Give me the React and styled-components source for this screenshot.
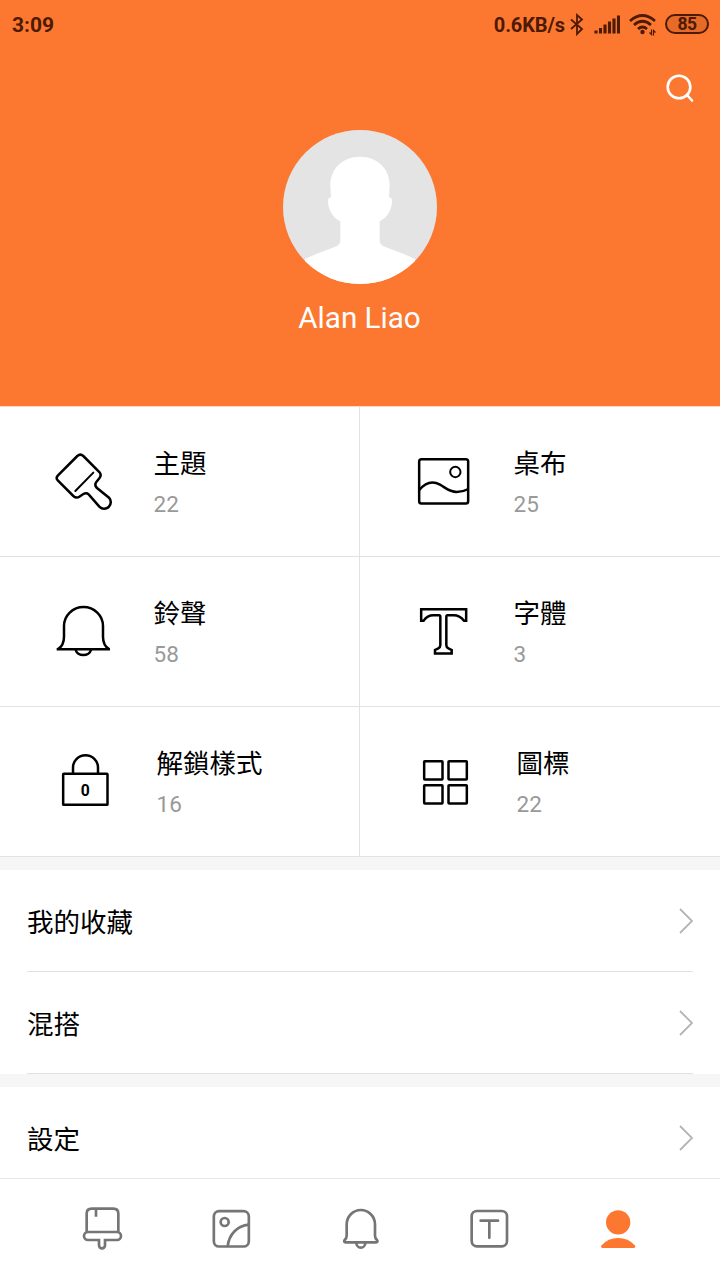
import styled, { createGlobalStyle } from "styled-components"

const GlobalStyle = createGlobalStyle`
  * {
    box-sizing: border-box;
  }
  body {
    margin: 0;
    background-color: #fff;
    font-family: Roboto, "Noto Sans CJK TC", sans-serif;
  }
  p {
    margin: 0;
  }
  svg {
    display: block;
    flex-shrink: 0;
  }
`

const Screen = styled.div`
  width: 720px;
  height: 1280px;
  display: flex;
  overflow: hidden;
  flex-direction: column;
  background-color: #fff;
`

const Header = styled.header`
  height: 406px;
  display: flex;
  flex-shrink: 0;
  align-items: center;
  flex-direction: column;
  background-color: #fc7830;
`

const StatusBar = styled.div`
  width: 100%;
  height: 48px;
  display: flex;
  color: #4d1a04;
  font-size: 20px;
  font-weight: 700;
  align-items: center;
  padding: 1px 11px 0 12px;
  justify-content: space-between;
`

const Time = styled.span`
  font-size: 21px;
`

const StatusRight = styled.div`
  display: flex;
  align-items: center;
`

const Speed = styled.span`
  letter-spacing: -0.1px;
`

const StatusIcon = styled.svg`
  fill: none;
  height: 24px;
  stroke: currentColor;
  width: ${(props) => props.$width}px;
  margin-left: ${(props) => props.$gap}px;
`

const Battery = styled.div`
  width: 44px;
  height: 20px;
  display: flex;
  font-size: 17.5px;
  margin: -2px 0 0 9px;
  align-items: center;
  border-radius: 10px;
  letter-spacing: -0.5px;
  justify-content: center;
  border: 2px solid currentColor;
  background-color: #e66a28;
`

const Toolbar = styled.div`
  width: 100%;
  height: 82px;
  display: flex;
  padding: 25px 25px 0 0;
  justify-content: flex-end;
`

const Avatar = styled.svg`
  width: 154px;
  height: 154px;
  border-radius: 50%;
  background-color: #e4e4e4;
`

const Username = styled.p`
  color: #fff;
  font-size: 29.6px;
  margin: 16px 1px 0 0;
  line-height: 36px;
`

const Grid = styled.section`
  display: grid;
  flex-shrink: 0;
  border-top: 1px solid #fdd9c4;
  grid-template-columns: 1fr 1fr;
`

const Cell = styled.div`
  height: 150px;
  display: flex;
  padding: 33px 0 0 40px;
  border-bottom: 1px solid #e2e2e2;
  &:nth-child(odd) {
    border-right: 1px solid #e2e2e2;
  }
`

const CellIcon = styled.svg`
  fill: none;
  width: 90px;
  height: 90px;
  stroke: #000;
  stroke-width: 7.5;
`

const CellText = styled.div`
  padding-top: 1px;
  padding-left: ${(props) => (props.$wide ? 26.5 : 23.5)}px;
`

const CellTitle = styled.p`
  color: #000;
  font-size: 26.5px;
  line-height: 46px;
`

const CellCount = styled.p`
  color: #999;
  font-size: 22.5px;
  line-height: 34px;
`

const Divider = styled.div`
  height: 13px;
  flex-shrink: 0;
  background-color: #f6f6f6;
`

const Row = styled.div`
  color: #000;
  height: 102px;
  display: flex;
  flex-shrink: 0;
  margin: 0 27px;
  font-size: 26.5px;
  align-items: center;
  justify-content: space-between;
  border-bottom: 1px solid #e2e2e2;
`

const List = styled.section`
  flex: 1;
  min-height: 0;
  display: flex;
  overflow: hidden;
  flex-direction: column;
`

const TabBar = styled.nav`
  height: 102px;
  display: flex;
  flex-shrink: 0;
  padding: 0 38px 0 37px;
  background-color: #fff;
  border-top: 1px solid #e8e8e8;
`

const Tab = styled.div`
  flex: 1;
  display: flex;
  padding-top: 20px;
  justify-content: center;
`

const TabIcon = styled.svg`
  width: 60px;
  height: 60px;
  stroke-width: 8;
  fill: ${(props) => (props.$active ? "#fc7830" : "none")};
  stroke: ${(props) => (props.$active ? "none" : "#757575")};
`

const cells = [
  {
    title: "主題",
    count: 22,
    icon: (
      <>
        <path d="M112 48L54 106Q46 114 54 122L100 168Q109 176 118 170L130 162Q139 157 146 163L178 200A19 19 0 0 0 207 173L171 144Q162 135 169 126L178 115Q186 105 178 96L130 48Q121 40 112 48Z" />
        <path d="M106 153L160 98" strokeWidth="6" strokeLinecap="round" />
      </>
    ),
  },
  {
    title: "桌布",
    count: 25,
    icon: (
      <>
        <rect x="57.5" y="57.5" width="147" height="133" rx="7" />
        <circle cx="166" cy="96" r="15.5" strokeWidth="6" />
        <path d="M58 150C76 128 98 122 120 134C138 144 148 156 170 156C184 156 196 152 205 147" />
      </>
    ),
  },
  {
    title: "鈴聲",
    count: 58,
    icon: (
      <>
        <path d="M54 177Q72 166 72 140V108A58.5 57 0 0 1 189 108V140Q189 166 207 177" />
        <path d="M50 178H210M107 180A23.5 19 0 0 0 153 180" />
      </>
    ),
  },
  {
    title: "字體",
    count: 3,
    icon: (
      <path d="M63.5 57.5H198.5V92H192Q179 76 161 76H143Q139 76 139 80V166Q139 172 145 175L155 180V190.5H105V180L115 175Q121 172 121 166V80Q121 76 117 76H100Q82 76 71 92H63.5Z" />
    ),
  },
  {
    title: "解鎖樣式",
    count: 16,
    wide: true,
    icon: (
      <>
        <rect x="69.5" y="101.5" width="133" height="93" rx="2" />
        <path d="M99 101V83A37.5 37.5 0 0 1 174 83V101" />
        <text
          x="136"
          y="167"
          fill="#000"
          stroke="none"
          fontSize="50"
          fontWeight="700"
          textAnchor="middle"
          textLength="27"
          lengthAdjust="spacingAndGlyphs"
        >
          0
        </text>
      </>
    ),
  },
  {
    title: "圖標",
    count: 22,
    wide: true,
    icon: (
      <>
        <rect x="72.5" y="63.5" width="55" height="55" rx="2" />
        <rect x="145.5" y="63.5" width="55" height="55" rx="2" />
        <rect x="72.5" y="135.5" width="55" height="55" rx="2" />
        <rect x="145.5" y="135.5" width="55" height="55" rx="2" />
      </>
    ),
  },
]

const tabs = [
  {
    name: "themes",
    icon: (
      <>
        <path d="M44 99V44Q44 29 59 29H124Q139 29 139 44V99M72 30V53" />
        <path d="M81 123H48A12 12 0 0 1 48 99H135A12 12 0 0 1 135 123H99V139A9 9 0 0 1 81 139V123Z" />
      </>
    ),
  },
  {
    name: "wallpapers",
    icon: (
      <>
        <rect x="38.5" y="36.5" width="105" height="106" rx="16" />
        <circle cx="71" cy="69" r="12" />
        <path d="M80 142C84 105 110 80 143 77" />
      </>
    ),
  },
  {
    name: "ringtones",
    icon: (
      <>
        <path d="M50 110V76A42.5 43 0 0 1 135 76V110Q135 117 141 123Q145 130 138 130H47Q40 130 44 123Q50 117 50 110Z" />
        <path d="M79 131A13.5 15 0 0 0 106 131" />
      </>
    ),
  },
  {
    name: "fonts",
    icon: (
      <>
        <rect x="38" y="36" width="106" height="106" rx="16" />
        <path d="M65 65H117M91 65V116" strokeLinecap="round" />
      </>
    ),
  },
  {
    name: "profile",
    active: true,
    icon: (
      <>
        <circle cx="90.5" cy="70" r="36.5" />
        <path d="M44 147Q36 146 41 139Q60 117 90.5 117Q121 117 140 139Q145 146 137 147Z" />
      </>
    ),
  },
]

const Chevron = () => (
  <svg width="14" height="26" fill="none" stroke="#b4b4b4" strokeWidth="1.8">
    <path d="M1 1L13 13L1 25" />
  </svg>
)

const App = () => {
  return (
    <Screen>
      <GlobalStyle />
      <Header>
        <StatusBar>
          <Time>3:09</Time>
          <StatusRight>
            <Speed>0.6KB/s</Speed>
            <StatusIcon $width={14} $gap={5} viewBox="0 0 14 24">
              <path d="M1 6.5L12 16L7 21V2L12 6.5L1 16" strokeWidth="1.8" />
            </StatusIcon>
            <StatusIcon $width={26} $gap={10} viewBox="0 0 26 24">
              <path
                d="M2 20.5V17.5M6.5 20.5V15M11 20.5V11.5M15.5 20.5V8.5M20 20.5V5.5M24.5 20.5V2.5"
                strokeWidth="3.1"
              />
            </StatusIcon>
            <StatusIcon $width={27} $gap={9} viewBox="0 0 27 24">
              <path
                d="M1 8Q13.5 -3 26 8M5 12Q13.5 4.5 22 12M9 16Q13.5 12 18 16"
                strokeWidth="2.7"
              />
              <circle cx="13.5" cy="19" r="2.2" fill="currentColor" stroke="none" />
              <path d="M22.5 16.5V21.5L20.5 19.5M24.5 22.5V17.5L26.5 19.5" strokeWidth="1.2" />
            </StatusIcon>
            <Battery>85</Battery>
          </StatusRight>
        </StatusBar>
        <Toolbar>
          <svg width="30" height="30" fill="none" stroke="#fff" strokeWidth="2.6">
            <circle cx="14" cy="14" r="11.3" />
            <path d="M22 22L27 27.5" strokeLinecap="round" />
          </svg>
        </Toolbar>
        <Avatar viewBox="0 0 462 462" fill="#fff">
          <path d="M231 80C180 80 142 115 142 165L144 203Q134 201 135 216C137 242 150 263 172 274V330Q172 343 160 349C130 362 95 372 66 387V462H396V387C367 372 332 362 302 349Q290 343 290 330V274C312 263 325 242 327 216Q328 201 318 203L320 165C320 115 282 80 231 80Z" />
        </Avatar>
        <Username>Alan Liao</Username>
      </Header>

      <Grid>
        {cells.map((item) => (
          <Cell key={item.title}>
            <CellIcon viewBox="0 0 270 270">{item.icon}</CellIcon>
            <CellText $wide={item.wide}>
              <CellTitle>{item.title}</CellTitle>
              <CellCount>{item.count}</CellCount>
            </CellText>
          </Cell>
        ))}
      </Grid>

      <List>
        <Divider />
        <Row>
          <p>我的收藏</p>
          <Chevron />
        </Row>
        <Row>
          <p>混搭</p>
          <Chevron />
        </Row>
        <Divider />
        <Row>
          <p>設定</p>
          <Chevron />
        </Row>
      </List>

      <TabBar>
        {tabs.map((tab) => (
          <Tab key={tab.name}>
            <TabIcon viewBox="0 0 180 180" $active={tab.active}>
              {tab.icon}
            </TabIcon>
          </Tab>
        ))}
      </TabBar>
    </Screen>
  )
}

export default App
